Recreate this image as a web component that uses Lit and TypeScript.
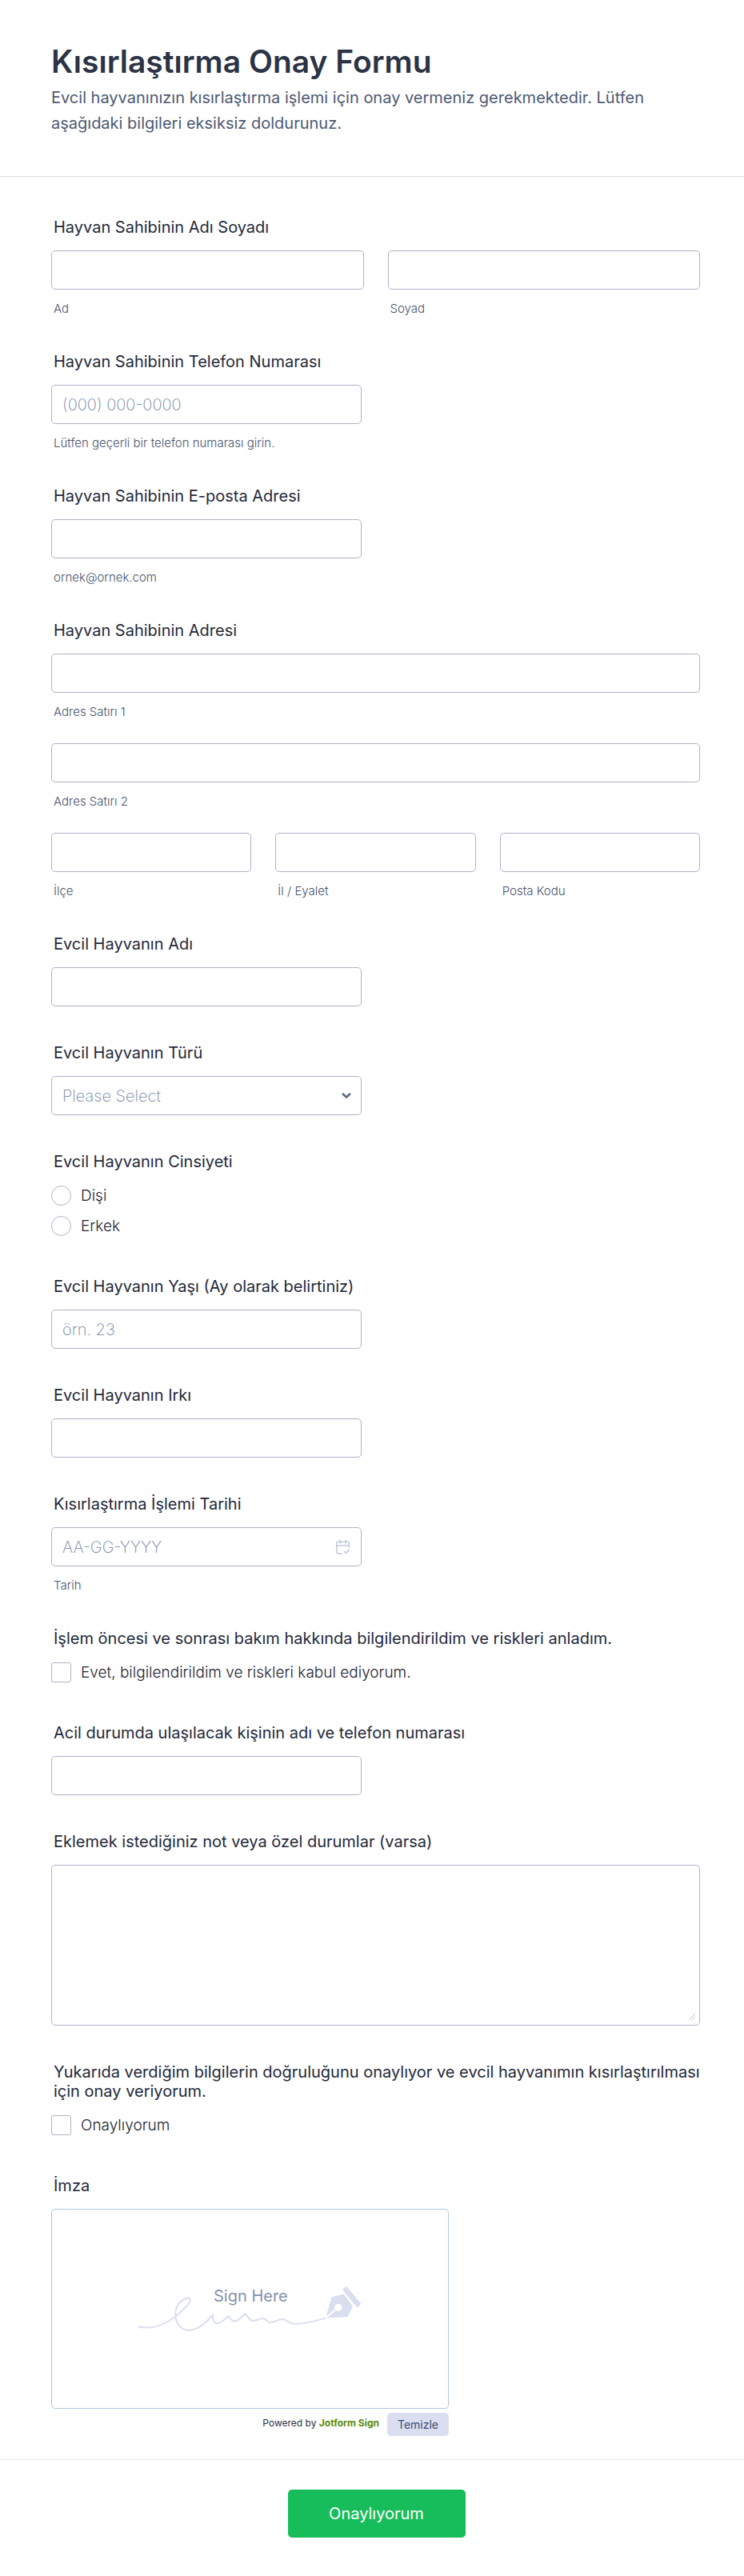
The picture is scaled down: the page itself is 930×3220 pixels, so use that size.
import { LitElement, html, css, svg } from "lit";
import { customElement, property } from "lit/decorators.js";

const base = css`
  *,
  *::before,
  *::after {
    box-sizing: border-box;
  }
  .label {
    display: block;
    margin: 0 0 17px;
    padding: 0 0 0 3px;
    color: #23293a;
    font-size: 20px;
    font-weight: 400;
    line-height: 24px;
  }
  .control {
    display: block;
    width: 100%;
    height: 49px;
    margin: 0;
    padding: 0 13px;
    border: 1px solid #aeb3c9;
    border-radius: 5px;
    outline: none;
    background: #fff;
    color: #2c3345;
    font: inherit;
    font-size: 20px;
  }
  .control:focus {
    border-color: #2e69ff;
  }
  .control::placeholder {
    color: #6f84a2;
    font-weight: 200;
    opacity: 1;
  }
  .short {
    width: 388px;
    max-width: 100%;
  }
  .sublabel {
    display: block;
    margin-top: 14px;
    padding: 0 3px;
    color: #46536e;
    font-size: 15px;
    font-weight: 300;
    line-height: 20px;
    margin-bottom: -2px;
  }
`;

@customElement("form-input")
class FormInput extends LitElement {
  @property() label = "";
  @property() sublabel = "";
  @property() placeholder = "";
  @property() type = "text";
  @property() name = "";
  @property({ type: Boolean }) compact = false;

  static styles = [
    base,
    css`
      :host {
        display: block;
      }
    `,
  ];

  render() {
    return html`
      ${this.label ? html`<label class="label" for="field">${this.label}</label>` : null}
      <input
        class="control ${this.compact ? "short" : ""}"
        id="field"
        name=${this.name}
        type=${this.type}
        placeholder=${this.placeholder}
      />
      ${this.sublabel ? html`<label class="sublabel" for="field">${this.sublabel}</label>` : null}
    `;
  }
}

@customElement("form-choices")
class FormChoices extends LitElement {
  @property() label = "";
  @property() type = "checkbox";
  @property({ attribute: false }) options: string[] = [];

  static styles = [
    base,
    css`
      :host {
        display: block;
      }
      .group {
        margin: 0;
        padding: 0;
        border: 0;
        min-width: 0;
      }
      .options {
        display: grid;
        gap: 13px;
        padding: 1px 0 5px;
      }
      .option {
        display: flex;
        align-items: center;
        gap: 12px;
        color: #1c2232;
        font-size: 19px;
        font-weight: 300;
        line-height: 25px;
      }
      .box {
        appearance: none;
        flex: none;
        width: 25px;
        height: 25px;
        margin: 0;
        border: 1px solid #aeb3c9;
        border-radius: 3px;
        background: #fff;
      }
      .box[type="radio"] {
        border-radius: 50%;
      }
      .box:checked {
        border-color: #2e69ff;
        background: #2e69ff;
        box-shadow: inset 0 0 0 5px #fff;
      }
    `,
  ];

  render() {
    return html`
      <fieldset class="group">
        <legend class="label">${this.label}</legend>
        <div class="options">
          ${this.options.map(
            (text, i) => html`
              <label class="option" for="option-${i}">
                <input class="box" id="option-${i}" name="choice" type=${this.type} />
                <span>${text}</span>
              </label>
            `
          )}
        </div>
      </fieldset>
    `;
  }
}

const chevron = svg`<path d="M1.700 2.500 L6 6.500 L10.300 2.500" fill="none" stroke="#57647e" stroke-width="2.4" stroke-linecap="round" stroke-linejoin="round" />`;

const calendar = svg`
  <g fill="none" stroke="#c3c8dc" stroke-width="1.5" stroke-linecap="round" stroke-linejoin="round">
    <path d="M17.400 10V4.800a1.500 1.500 0 0 0-1.500-1.500H3.300A1.500 1.500 0 0 0 1.800 4.800v11.700A1.500 1.500 0 0 0 3.300 18h5" />
    <path d="M1.800 7.900h15.600M6.300 1.500v3.400M13 1.500v3.400M11.300 15.300l2.100 2.100 4-4" />
  </g>
`;

const signature = svg`
  <path
    d="M1 52.500 C18 56 32 51 47 40 C58 31 66 22 66 19 C65 16 63 16 61 17 C50 20 45 33 48 43 C51 54 60 59 69 56 C78 54 86 47 94 37.500 C94 42 95 48 99 48.500 C106 48 108 42 114 39 C116 42 117 46 122 45.500 C128 44 130 39 134.700 36.500 C138 38 138 45 144 45 C149 45 152 42 157 42 C161 42 161 47 166 47 C172 47 175 43 181 43 C187 43 188 49 198 49 C209 49 222 45 234 42"
    fill="none"
    stroke="#dadfef"
    stroke-width="2"
    stroke-linecap="round"
    stroke-linejoin="round"
  />
  <path
    d="M235.700 41 L243 15.700 L257.700 12 L268.300 26.700 L262.300 39.700 Z M256.300 6.300 L261 2.300 L279 24 L274.700 28 Z"
    fill="#dadfef"
    stroke="#dadfef"
    stroke-width="1"
    stroke-linejoin="round"
  />
  <circle cx="250.700" cy="28.300" r="4.600" fill="#fff" />
  <path d="M250 29 L235 41.500" stroke="#fff" stroke-width="2" />
  <text class="sign-text" x="95" y="21">Sign Here</text>
`;

@customElement("app-root")
class AppRoot extends LitElement {
  static styles = [
    base,
    css`
      :host {
        display: block;
        background: #fff;
        color: #2c3345;
        font-family: Inter, "Liberation Sans", sans-serif;
      }
      .header {
        padding: 53px 64px 50px;
        border-bottom: 1px solid #d7d8e1;
      }
      .title {
        margin: 0;
        font-size: 39px;
        font-weight: 600;
        line-height: 48px;
      }
      .intro {
        margin: 5px 0 0;
        color: #4c5973;
        font-size: 20px;
        font-weight: 400;
        line-height: 32px;
      }
      .fields {
        display: grid;
        gap: 46px;
        padding: 51px 55px 29px 64px;
      }
      .pair {
        display: grid;
        grid-template-columns: 1fr 1fr;
        gap: 30px;
      }
      .address {
        display: grid;
        gap: 31px;
      }
      .triple {
        display: grid;
        grid-template-columns: repeat(3, 1fr);
        gap: 30px;
      }
      .with-icon {
        position: relative;
      }
      .select {
        appearance: none;
        color: #6f84a2;
        font-weight: 200;
      }
      .chevron {
        position: absolute;
        top: 20px;
        right: 13px;
        width: 12px;
        height: 9px;
        pointer-events: none;
      }
      .date-button {
        position: absolute;
        top: 15px;
        right: 13px;
        width: 20px;
        height: 20px;
        padding: 0;
        border: 0;
        background: none;
        cursor: pointer;
      }
      .calendar {
        display: block;
        width: 20px;
        height: 20px;
      }
      .notes {
        height: 201px;
        padding: 12px 13px;
        resize: vertical;
      }
      .notes::-webkit-resizer {
        background: transparent;
      }
      .grip {
        position: absolute;
        right: 5px;
        bottom: 6px;
        width: 10px;
        height: 10px;
        pointer-events: none;
      }
      .signature {
        width: 497px;
        max-width: 100%;
      }
      .pad {
        display: grid;
        place-items: center;
        height: 250px;
        border: 1px solid #b0c6e1;
        border-radius: 5px;
      }
      .sign-art {
        display: block;
        width: 282px;
        height: 60px;
      }
      .sign-text {
        fill: #8391ae;
        font-size: 20px;
      }
      .sign-row {
        display: flex;
        justify-content: flex-end;
        align-items: flex-start;
        gap: 10px;
        margin-top: 5px;
      }
      .powered {
        margin: 5px 0 0;
        font-size: 12px;
        line-height: 16px;
      }
      .brand {
        color: #5b8a0a;
        font-weight: 700;
        text-decoration: none;
      }
      .clear {
        height: 29px;
        padding: 0 13px;
        border: 0;
        border-radius: 5px;
        background: #dadef0;
        color: #3d4a70;
        font: inherit;
        font-size: 14px;
        cursor: pointer;
      }
      .footer {
        display: flex;
        justify-content: center;
        padding: 37px 53px 49px 64px;
        border-top: 1px solid #e5e7f0;
      }
      .submit {
        min-width: 222px;
        height: 60px;
        padding: 0 20px;
        border: 0;
        border-radius: 5px;
        background: #18bd5b;
        color: #fff;
        font: inherit;
        font-size: 20px;
        cursor: pointer;
      }
    `,
  ];

  render() {
    return html`
      <form @submit=${(e: Event) => e.preventDefault()}>
        <header class="header">
          <h1 class="title">Kısırlaştırma Onay Formu</h1>
          <p class="intro">
            Evcil hayvanınızın kısırlaştırma işlemi için onay vermeniz gerekmektedir. Lütfen
            aşağıdaki bilgileri eksiksiz doldurunuz.
          </p>
        </header>

        <div class="fields">
          <div role="group" aria-labelledby="owner-name">
            <span class="label" id="owner-name">Hayvan Sahibinin Adı Soyadı</span>
            <div class="pair">
              <form-input name="first" sublabel="Ad"></form-input>
              <form-input name="last" sublabel="Soyad"></form-input>
            </div>
          </div>

          <form-input
            compact
            type="tel"
            name="phone"
            label="Hayvan Sahibinin Telefon Numarası"
            placeholder="(000) 000-0000"
            sublabel="Lütfen geçerli bir telefon numarası girin."
          ></form-input>

          <form-input
            compact
            type="email"
            name="email"
            label="Hayvan Sahibinin E-posta Adresi"
            sublabel="ornek@ornek.com"
          ></form-input>

          <div role="group" aria-labelledby="owner-address">
            <span class="label" id="owner-address">Hayvan Sahibinin Adresi</span>
            <div class="address">
              <form-input name="line1" sublabel="Adres Satırı 1"></form-input>
              <form-input name="line2" sublabel="Adres Satırı 2"></form-input>
              <div class="triple">
                <form-input name="district" sublabel="İlçe"></form-input>
                <form-input name="province" sublabel="İl / Eyalet"></form-input>
                <form-input name="postcode" sublabel="Posta Kodu"></form-input>
              </div>
            </div>
          </div>

          <form-input compact name="pet" label="Evcil Hayvanın Adı"></form-input>

          <div class="short">
            <label class="label" for="species">Evcil Hayvanın Türü</label>
            <div class="with-icon">
              <select class="control select" id="species">
                <option>Please Select</option>
              </select>
              <svg class="chevron" viewBox="0 0 12 9" aria-hidden="true">${chevron}</svg>
            </div>
          </div>

          <form-choices
            type="radio"
            label="Evcil Hayvanın Cinsiyeti"
            .options=${["Dişi", "Erkek"]}
          ></form-choices>

          <form-input
            compact
            name="age"
            label="Evcil Hayvanın Yaşı (Ay olarak belirtiniz)"
            placeholder="örn. 23"
          ></form-input>

          <form-input compact name="breed" label="Evcil Hayvanın Irkı"></form-input>

          <div class="short">
            <label class="label" for="date">Kısırlaştırma İşlemi Tarihi</label>
            <div class="with-icon">
              <input class="control" id="date" type="text" placeholder="AA-GG-YYYY" />
              <button class="date-button" type="button" aria-label="Takvim">
                <svg class="calendar" viewBox="0 0 20 20" aria-hidden="true">${calendar}</svg>
              </button>
            </div>
            <label class="sublabel" for="date">Tarih</label>
          </div>

          <form-choices
            label="İşlem öncesi ve sonrası bakım hakkında bilgilendirildim ve riskleri anladım."
            .options=${["Evet, bilgilendirildim ve riskleri kabul ediyorum."]}
          ></form-choices>

          <form-input
            compact
            name="emergency"
            label="Acil durumda ulaşılacak kişinin adı ve telefon numarası"
          ></form-input>

          <div>
            <label class="label" for="notes">Eklemek istediğiniz not veya özel durumlar (varsa)</label>
            <div class="with-icon">
              <textarea class="control notes" id="notes"></textarea>
              <svg class="grip" viewBox="0 0 10 10" aria-hidden="true">
                <path d="M1 9 L9 1 M5 9 L9 5" stroke="#b8bcd0" stroke-width="1" />
              </svg>
            </div>
          </div>

          <form-choices
            label="Yukarıda verdiğim bilgilerin doğruluğunu onaylıyor ve evcil hayvanımın kısırlaştırılması için onay veriyorum."
            .options=${["Onaylıyorum"]}
          ></form-choices>

          <div class="signature" role="group" aria-labelledby="sign-label">
            <span class="label" id="sign-label">İmza</span>
            <div class="pad">
              <svg class="sign-art" viewBox="0 0 282 60">${signature}</svg>
            </div>
            <div class="sign-row">
              <p class="powered">
                Powered by <a class="brand" href="#sign">Jotform Sign</a>
              </p>
              <button class="clear" type="button">Temizle</button>
            </div>
          </div>
        </div>

        <footer class="footer">
          <button class="submit" type="submit">Onaylıyorum</button>
        </footer>
      </form>
    `;
  }
}
